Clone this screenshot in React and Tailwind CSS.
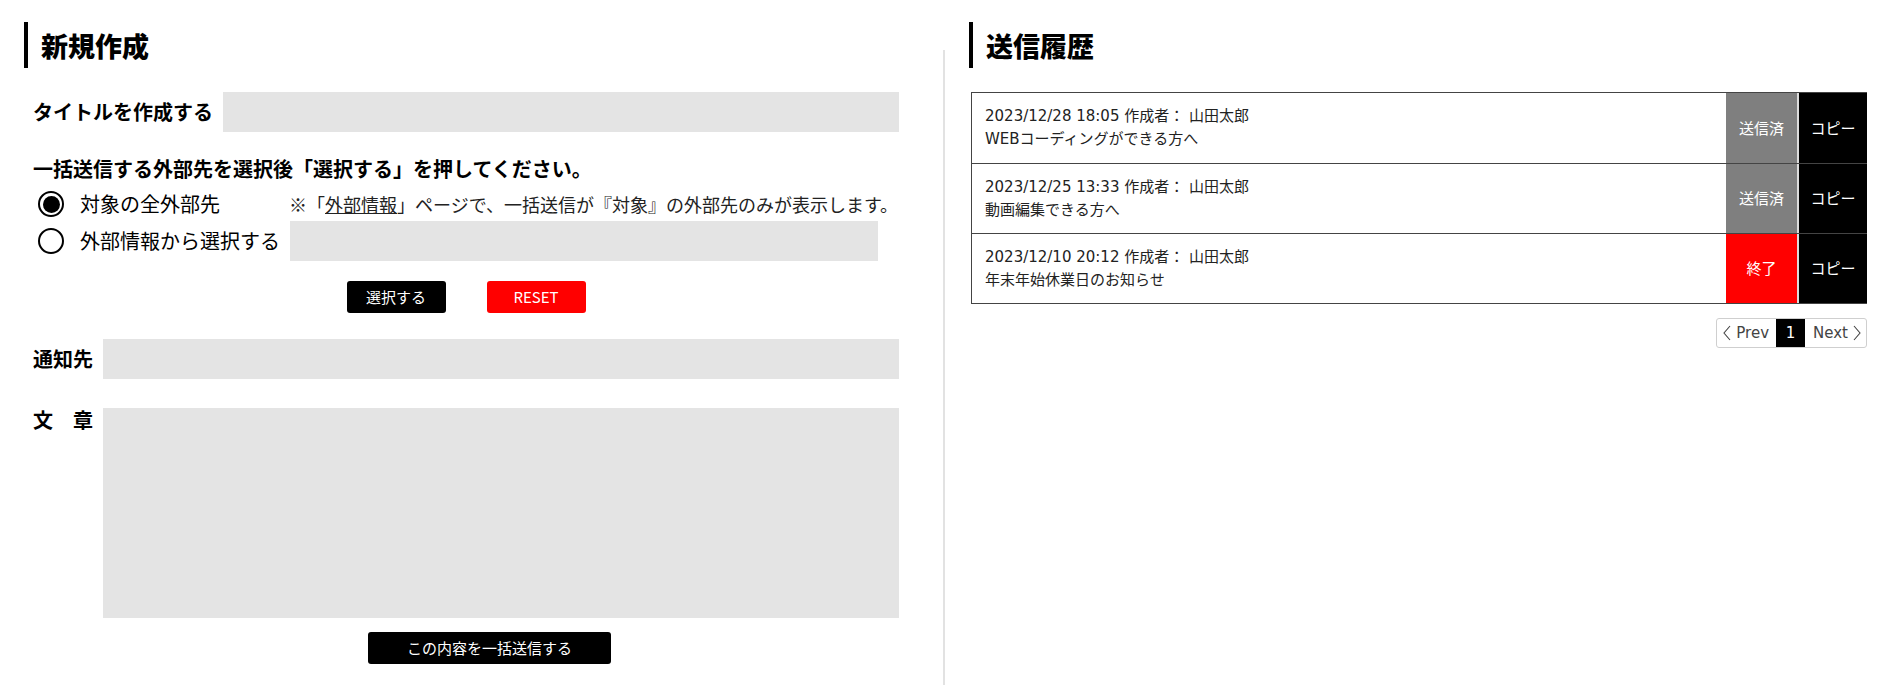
const font = { fontFamily: '"Noto Sans CJK JP", "Noto Sans", sans-serif' }
const wide = { fontFamily: '"DejaVu Sans", "Noto Sans CJK JP", sans-serif' }

const history = [
  { date: '2023/12/28 18:05', author: '山田太郎', title: 'WEBコーディングができる方へ', status: '送信済', done: false },
  { date: '2023/12/25 13:33', author: '山田太郎', title: '動画編集できる方へ', status: '送信済', done: false },
  { date: '2023/12/10 20:12', author: '山田太郎', title: '年末年始休業日のお知らせ', status: '終了', done: true },
]

const Heading = ({ children }) => (
  <div className="h-[46px] border-l-4 border-black pl-[13px] flex items-center">
    <h2 className="text-[27px] leading-none font-black text-black">{children}</h2>
  </div>
)

const Radio = ({ checked }) => (
  <div className="w-[26px] h-[26px] rounded-full border-2 border-black flex items-center justify-center shrink-0">
    {checked && <div className="w-[17px] h-[17px] rounded-full bg-black" />}
  </div>
)

const Chevron = ({ dir }) => (
  <svg width="10" height="20" viewBox="0 0 10 20" fill="none" stroke="currentColor" strokeWidth="1.1">
    {dir === 'left' ? <polyline points="8,3 2,10 8,17" /> : <polyline points="2,3 8,10 2,17" />}
  </svg>
)

export default function App() {
  return (
    <div className="min-h-[685px] w-[1889px] bg-white flex text-black" style={font}>
      {/* 新規作成 */}
      <div className="w-[943px] shrink-0 pl-6 pr-[44px] pt-[22px]">
        <Heading>新規作成</Heading>

        <div className="pl-[9px]">
          <div className="mt-[24px] flex items-center">
            <label className="w-[190px] shrink-0 text-[20px] font-bold leading-[30px]">タイトルを作成する</label>
            <div className="flex-1 h-[40px] bg-[#e4e4e4]" />
          </div>

          <p className="mt-[22px] text-[20px] font-bold leading-[30px]">
            一括送信する外部先を選択後「選択する」を押してください。
          </p>

          <div className="mt-[3px] h-[34px] flex items-center">
            <div className="w-[256px] shrink-0 flex items-center pl-[5px]">
              <Radio checked />
              <span className="ml-[16px] text-[20px] leading-[30px]">対象の全外部先</span>
            </div>
            <span className="text-[18px] leading-[30px] text-[#222] whitespace-nowrap">
              ※「<span className="underline">外部情報</span>」ページで、一括送信が『対象』の外部先のみが表示します。
            </span>
          </div>

          <div className="h-[40px] flex items-center">
            <div className="w-[257px] shrink-0 flex items-center pl-[5px]">
              <Radio />
              <span className="ml-[16px] text-[20px] leading-[30px] whitespace-nowrap">外部情報から選択する</span>
            </div>
            <div className="w-[588px] h-[40px] bg-[#e4e4e4]" />
          </div>

          <div className="mt-[20px] flex justify-center gap-[41px]">
            <button className="w-[99px] h-[32px] rounded-[3px] bg-black text-white text-[15px]">選択する</button>
            <button className="w-[99px] h-[32px] rounded-[3px] bg-[#ff0000] text-white text-[15px]">RESET</button>
          </div>

          <div className="mt-[26px] flex items-center">
            <label className="w-[70px] shrink-0 text-[20px] font-bold leading-[30px]">通知先</label>
            <div className="flex-1 h-[40px] bg-[#e4e4e4]" />
          </div>

          <div className="mt-[29px] flex items-start">
            <label className="w-[70px] shrink-0 text-[20px] font-bold leading-[30px] -mt-[3px]">文　章</label>
            <div className="flex-1 h-[210px] bg-[#e4e4e4]" />
          </div>

          <div className="mt-[14px] pl-[335px]">
            <button className="w-[243px] h-[32px] rounded-[3px] bg-black text-white text-[15px]">この内容を一括送信する</button>
          </div>
        </div>
      </div>

      {/* divider */}
      <div className="mt-[50px] w-[2px] bg-[#e2e2e2] self-stretch" />

      {/* 送信履歴 */}
      <div className="flex-1 pl-[24px] pr-[22px] pt-[22px]">
        <Heading>送信履歴</Heading>

        <div className="mt-[24px] ml-[2px] border-t border-b border-[#444]">
          {history.map((row, i) => (
            <div key={i} className={`flex h-[70px] ${i > 0 ? 'border-t border-[#444]' : ''}`}>
              <div className="flex-1 border-l border-[#444] pl-[13px] flex flex-col justify-center text-[15px] leading-[23px] text-[#222]" style={wide}>
                <span>{row.date} 作成者： {row.author}</span>
                <span>{row.title}</span>
              </div>
              <div className={`w-[71px] flex items-center justify-center text-white text-[15px] ${row.done ? 'bg-[#ff0000]' : 'bg-[#7f7f7f]'}`}>
                {row.status}
              </div>
              <div className="w-[2px] bg-[#dcdcdc]" />
              <div className="w-[68px] bg-black flex items-center justify-center text-white text-[15px]">コピー</div>
            </div>
          ))}
        </div>

        <div className="mt-[14px] flex justify-end">
          <div className="h-[30px] flex border border-[#cfcfcf] rounded-[3px] text-[15px] text-[#444] overflow-hidden" style={wide}>
            <span className="flex items-center gap-[4px] pl-[5px] pr-[7px]">
              <Chevron dir="left" />
              Prev
            </span>
            <span className="w-[29px] bg-black text-white flex items-center justify-center">1</span>
            <span className="flex items-center gap-[4px] pl-[8px] pr-[4px]">
              Next
              <Chevron dir="right" />
            </span>
          </div>
        </div>
      </div>
    </div>
  )
}
